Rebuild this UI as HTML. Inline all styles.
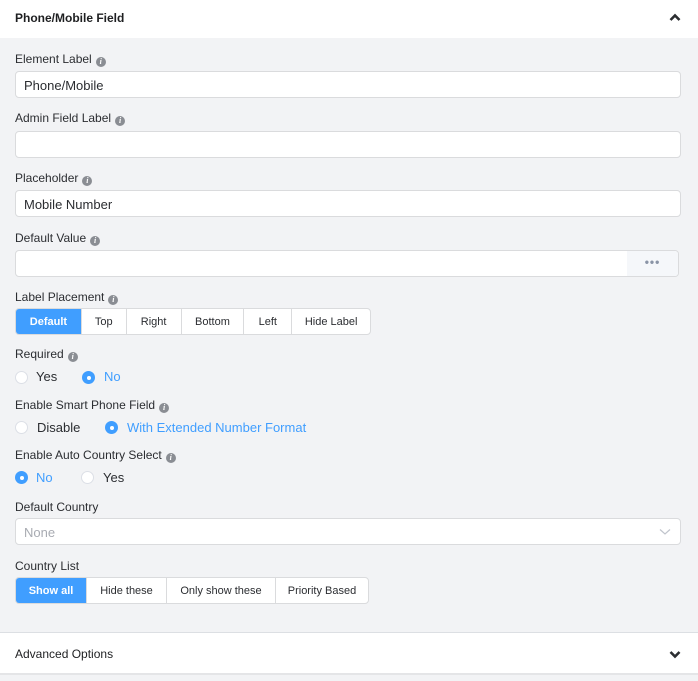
<!DOCTYPE html>
<html><head><style>
*{box-sizing:border-box;margin:0;padding:0}
body{width:698px;height:681px;background:#f2f3f5;font-family:"Liberation Sans",sans-serif;color:#1e1f21;position:relative;overflow:hidden;font-size:12px}
.a{position:absolute}
.hdr{left:0;top:0;width:698px;height:38px;background:#fff}
.lbl{position:absolute;left:15px;font-size:12px;color:#2b2d31;line-height:14px}
.i{display:inline-block;width:10px;height:10px;border-radius:50%;background:#8a8d93;color:#fff;font-size:8px;font-style:italic;font-weight:bold;text-align:center;line-height:10px;vertical-align:-1px;margin-left:4px;font-family:"Liberation Serif",serif}
.inp{position:absolute;left:15px;width:666px;height:27px;background:#fff;border:1px solid #dadbdd;border-radius:4px;font-size:13px;color:#2b2d31;padding:6px 8px;line-height:15px}
.seg{position:absolute;display:flex;height:27px;border:1px solid #dadbdd;border-radius:4px;background:#fff;overflow:hidden}
.seg div{height:100%;border-left:1px solid #dadbdd;font-size:11px;line-height:26px;text-align:center;color:#2b2d31}
.seg div:first-child{border-left:none;background:#409eff;color:#fff;font-weight:bold}
.r{position:absolute;width:13px;height:13px;border-radius:50%;border:1px solid #dcdfe6;background:#fff}
.r.on{background:#409eff;border-color:#409eff}
.r.on:after{content:"";position:absolute;left:3.5px;top:3.5px;width:4px;height:4px;border-radius:50%;background:#fff}
.rt{position:absolute;font-size:13px;line-height:15px;color:#2b2d31}
.rt.on{color:#409eff}
</style></head><body>
<div class="a hdr"></div>
<div class="a" style="left:15px;top:11px;font-size:12px;font-weight:bold;line-height:15px">Phone/Mobile Field</div>
<svg class="a" style="left:669px;top:13px" width="12" height="9" viewBox="0 0 12 9"><path d="M1.5 7 L6 2.5 L10.5 7" stroke="#2b2d31" stroke-width="2.6" fill="none"/></svg>

<div class="lbl" style="top:52px">Element Label<span class="i">i</span></div>
<div class="inp" style="top:71px">Phone/Mobile</div>
<div class="lbl" style="top:111px">Admin Field Label<span class="i">i</span></div>
<div class="inp" style="top:131px"></div>
<div class="lbl" style="top:171px">Placeholder<span class="i">i</span></div>
<div class="inp" style="top:190px">Mobile Number</div>
<div class="lbl" style="top:231px">Default Value<span class="i">i</span></div>
<div class="inp" style="top:250px;width:664px;padding:0;overflow:hidden"><div style="position:absolute;right:0;top:0;width:51px;height:100%;background:#f5f7fa;color:#8a94a6;text-align:center;font-size:12px;line-height:22px;font-weight:bold;letter-spacing:1px">•••</div></div>

<div class="lbl" style="top:290px">Label Placement<span class="i">i</span></div>
<div class="seg" style="left:15px;top:308px;width:356px">
<div style="width:65px">Default</div><div style="width:45px">Top</div><div style="width:55px">Right</div><div style="width:63px">Bottom</div><div style="width:48px">Left</div><div style="width:79px">Hide Label</div></div>

<div class="lbl" style="top:347px">Required<span class="i">i</span></div>
<div class="r" style="left:15px;top:371px"></div><div class="rt" style="left:36px;top:369px">Yes</div>
<div class="r on" style="left:82px;top:371px"></div><div class="rt on" style="left:104px;top:369px">No</div>

<div class="lbl" style="top:398px">Enable Smart Phone Field<span class="i">i</span></div>
<div class="r" style="left:15px;top:421px"></div><div class="rt" style="left:37px;top:420px">Disable</div>
<div class="r on" style="left:105px;top:421px"></div><div class="rt on" style="left:127px;top:420px">With Extended Number Format</div>

<div class="lbl" style="top:448px">Enable Auto Country Select<span class="i">i</span></div>
<div class="r on" style="left:15px;top:471px"></div><div class="rt on" style="left:36px;top:470px">No</div>
<div class="r" style="left:81px;top:471px"></div><div class="rt" style="left:103px;top:470px">Yes</div>

<div class="lbl" style="top:500px">Default Country</div>
<div class="inp" style="top:518px;color:#a8abb2">None</div>
<svg class="a" style="left:659px;top:528px" width="12" height="8" viewBox="0 0 12 8"><path d="M1 1.5 L6 6 L11 1.5" stroke="#c0c4cc" stroke-width="1.2" fill="none"/></svg>

<div class="lbl" style="top:559px">Country List</div>
<div class="seg" style="left:15px;top:577px;width:354px">
<div style="width:70px">Show all</div><div style="width:80px">Hide these</div><div style="width:109px">Only show these</div><div style="width:93px">Priority Based</div></div>

<div class="a" style="left:0;top:632px;width:698px;height:43px;background:#fff;border-top:1px solid #dcdfe3;border-bottom:2px solid #e4e5e7"></div>
<div class="a" style="left:15px;top:647px;font-size:12px;line-height:14px">Advanced Options</div>
<svg class="a" style="left:669px;top:650px" width="12" height="9" viewBox="0 0 12 9"><path d="M1.5 2 L6 6.5 L10.5 2" stroke="#2b2d31" stroke-width="2.6" fill="none"/></svg>
</body></html>
